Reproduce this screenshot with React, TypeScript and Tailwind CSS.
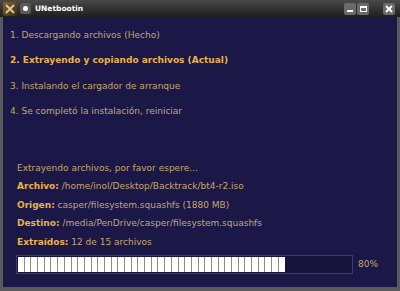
import React from "react";

const segs = Array.from({ length: 40 });

export default function App() {
  return (
    <div className="w-[400px] h-[291px] bg-[#5a5a5a] flex flex-col overflow-hidden" style={{ fontFamily: '"DejaVu Sans", sans-serif' }}>
      {/* Title bar */}
      <div className="h-[17px] bg-gradient-to-b from-[#4a4a4a] to-[#1e1e1e] flex items-center">
        <div className="w-[14px] h-[14px] ml-[3px] rounded-[2px] bg-gradient-to-br from-[#8a6a2a] to-[#3a2a10] flex items-center justify-center">
          <svg width="12" height="12" viewBox="0 0 12 12">
            <path d="M2 2 L10 10 M10 2 L2 10" stroke="#d8c8a0" strokeWidth="2" />
          </svg>
        </div>
        <div className="w-[11px] h-[11px] ml-[3px] rounded-[2px] bg-[#5a5a5a] flex items-center justify-center">
          <div className="w-[5px] h-[5px] rounded-full bg-white" />
        </div>
        <span className="ml-[4px] text-[7.5px] font-bold text-white leading-none">UNetbootin</span>
        <div className="flex-1" />
        <div className="w-[12px] h-[12px] rounded-[2px] bg-[#6a6a6a] flex items-end justify-center pb-[3px]">
          <div className="w-[6px] h-[2px] bg-white" />
        </div>
        <div className="w-[12px] h-[12px] ml-[1px] rounded-[2px] bg-[#6a6a6a] flex items-center justify-center">
          <div className="w-[7px] h-[6px] border border-white border-t-2" />
        </div>
        <div className="w-[12px] h-[12px] ml-[14px] mr-[5px] rounded-[2px] bg-[#6a6a6a] flex items-center justify-center">
          <svg width="8" height="8" viewBox="0 0 8 8">
            <path d="M1 1 L7 7 M7 1 L1 7" stroke="white" strokeWidth="2" />
          </svg>
        </div>
      </div>
      {/* Body */}
      <div className="flex-1 mx-[3px] mb-[4px] bg-[#1b1848] text-[9px] text-[#c4a66c] flex flex-col">
        <div className="pl-[7px] pt-[11.5px] flex flex-col gap-[12.5px] leading-[13px]">
          <div>1. Descargando archivos (Hecho)</div>
          <div className="font-bold text-[#e8b24a]">2. Extrayendo y copiando archivos (Actual)</div>
          <div>3. Instalando el cargador de arranque</div>
          <div>4. Se completó la instalación, reiniciar</div>
        </div>
        <div className="pl-[14px] mt-[43.5px] flex flex-col gap-[5.5px] leading-[13px]">
          <div>Extrayendo archivos, por favor espere...</div>
          <div><span className="font-bold text-[#e8b24a]">Archivo:</span> /home/inol/Desktop/Backtrack/bt4-r2.iso</div>
          <div><span className="font-bold text-[#e8b24a]">Origen:</span> casper/filesystem.squashfs (1880 MB)</div>
          <div><span className="font-bold text-[#e8b24a]">Destino:</span> /media/PenDrive/casper/filesystem.squashfs</div>
          <div><span className="font-bold text-[#e8b24a]">Extraídos:</span> 12 de 15 archivos</div>
        </div>
        <div className="flex items-center ml-[13px] mt-[6.5px]">
          <div className="w-[337px] h-[19px] border border-[#3c3a7a] bg-[#16143c] p-[1px]">
            <div className="h-full w-[80%] flex bg-[#8a8a8a] gap-[1px]">
              {segs.map((_, i) => (
                <div key={i} className="flex-1 bg-white" />
              ))}
            </div>
          </div>
          <span className="ml-[5px]">80%</span>
        </div>
      </div>
    </div>
  );
}
